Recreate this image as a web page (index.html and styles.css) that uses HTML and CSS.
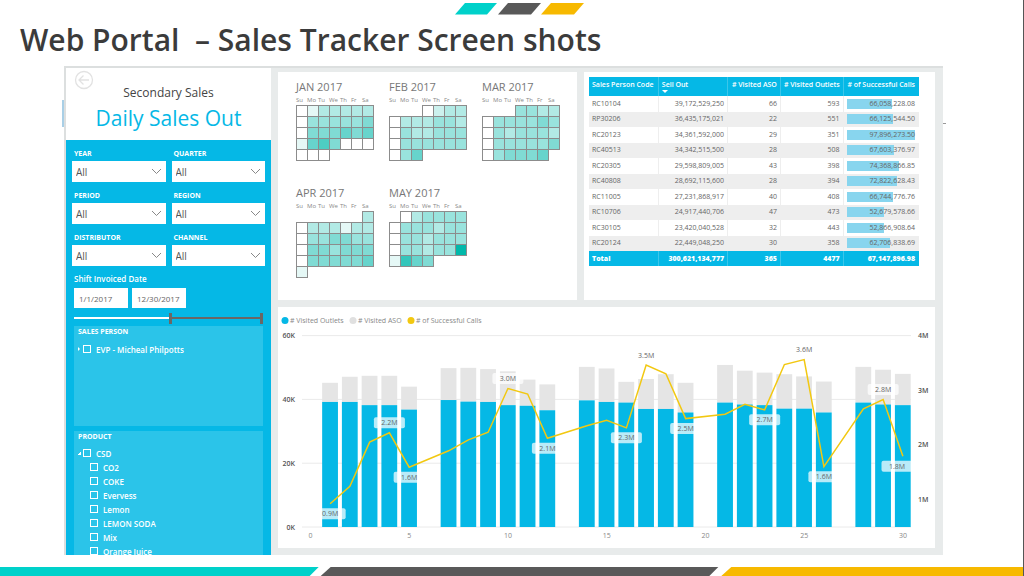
FILE: index.html
```html
<!DOCTYPE html>
<html lang="en">
<head>
<meta charset="utf-8">
<title>Sales Tracker</title>
<link rel="stylesheet" href="styles.css">
</head>
<body>
<header class="slide-header">
  <svg class="brand" viewBox="0 0 129 12" width="129" height="12" aria-hidden="true">
    <path fill="#00d1ca" d="M10 0H42L32 11.500H0z"/>
    <path fill="#595959" d="M53 0H86L76 11.500H43z"/>
    <path fill="#f7b900" d="M96 0H129L119 11.500H86z"/>
  </svg>
  <h1 class="slide-title">Web Portal&nbsp; – Sales Tracker Screen shots</h1>
</header>

<main class="dashboard">
  <aside class="sidebar">
    <div class="report-head">
      <button class="back" type="button" aria-label="Back">
        <svg viewBox="0 0 20 20" width="20" height="20" fill="none" stroke="#e2e2e2" stroke-width="1.300"><circle cx="10" cy="10" r="8.500"/><path d="M15 10H5.500M9.500 5.500L5 10l4.500 4.500"/></svg>
      </button>
      <p class="report-sub">Secondary Sales</p>
      <h2 class="report-name">Daily Sales Out</h2>
    </div>
    <form class="filters">
      <div class="filter-grid" id="filters"></div>
      <fieldset class="dates">
        <legend>Shift Invoiced Date</legend>
        <input type="text" value="1/1/2017" aria-label="Start date">
        <input type="text" value="12/30/2017" aria-label="End date">
      </fieldset>
      <div class="range">
        <input type="range" min="0" max="100" value="51" aria-label="Range start">
        <input type="range" min="0" max="100" value="100" aria-label="Range end">
      </div>
      <section class="tree tree-person">
        <h3>SALES PERSON</h3>
        <label class="node"><span class="twist"></span><input type="checkbox">EVP - Micheal Philpotts</label>
      </section>
      <section class="tree tree-product">
        <h3>PRODUCT</h3>
        <label class="node"><span class="twist open"></span><input type="checkbox">CSD</label>
        <label class="node child"><input type="checkbox">CO2</label>
        <label class="node child"><input type="checkbox">COKE</label>
        <label class="node child"><input type="checkbox">Evervess</label>
        <label class="node child"><input type="checkbox">Lemon</label>
        <label class="node child"><input type="checkbox">LEMON SODA</label>
        <label class="node child"><input type="checkbox">Mix</label>
        <label class="node child"><input type="checkbox">Orange Juice</label>
      </section>
    </form>
  </aside>

  <div class="report">
    <section class="panel calendars" id="calendars"></section>
    <section class="panel table-panel">
      <table class="sales">
        <colgroup><col class="c-code"><col class="c-sell"><col class="c-aso"><col class="c-out"><col class="c-calls"></colgroup>
        <thead><tr><th>Sales Person Code</th><th class="sorted">Sell Out</th><th class="num"># Visited ASO</th><th class="num"># Visited Outlets</th><th class="num"># of Successful Calls</th></tr></thead>
        <tbody id="rows"></tbody>
        <tfoot><tr><td>Total</td><td class="num">300,621,134,777</td><td class="num">365</td><td class="num">4477</td><td class="num">67,147,896.98</td></tr></tfoot>
      </table>
    </section>
    <section class="panel chart-panel">
      <svg class="chart" id="chart" viewBox="0 0 657 240" role="img" aria-label="Visits and successful calls by day"></svg>
    </section>
  </div>
</main>

<footer class="slide-footer">
  <svg viewBox="0 0 1024 9" preserveAspectRatio="none" aria-hidden="true">
    <path fill="#00d1ca" d="M0 0H319L310 9H0z"/>
    <path fill="#595959" d="M331 0H719L710 9H321z"/>
    <path fill="#f7b900" d="M732 0H1024V9H722z"/>
  </svg>
</footer>
<script src="app.js"></script>
</body>
</html>
```
FILE: styles.css
```css
* { box-sizing: border-box; }
body {
  margin: 0;
  min-height: 100vh;
  display: flex;
  flex-direction: column;
  background: #fff;
  color: #666;
  font-family: "Open Sans", "Noto Sans", sans-serif;
  font-size: 8px;
  border-right: 1px solid #555;
}
h1, h2, h3, p { margin: 0; font-weight: 400; }
button, input, select { font: inherit; color: inherit; }

.slide-header { height: 66px; padding: 3px 20px 0; }
.brand { display: block; margin-left: 435px; }
.slide-title { margin-top: 4px; font-size: 30px; line-height: 42px; font-weight: 600; color: #3b3b3b; white-space: nowrap; }

.dashboard {
  position: relative;
  display: flex;
  min-height: 489px;
  margin: 0 80px 0 64px;
  border-left: 2px solid #dcdfdf;
  border-top: 2px solid #dcdfdf;
  background: #e8ebeb;
}
.dashboard::before { content: ""; position: absolute; left: -4px; top: 32px; width: 2px; height: 27px; background: #a9cfe6; }
.dashboard::after { content: ""; position: absolute; right: -3px; top: 55px; width: 3px; height: 1px; background: #999; }

.sidebar { width: 205px; flex: none; display: flex; flex-direction: column; background: #05b8e6; }
.report-head { position: relative; height: 72px; padding-top: 16px; background: #fff; text-align: center; }
.back { position: absolute; left: 8px; top: 2px; width: 20px; height: 20px; padding: 0; border: 0; background: none; }
.back svg { display: block; }
.report-sub { font-size: 12px; line-height: 18px; color: #444; }
.report-name { font-size: 21px; line-height: 32px; color: #05b8e6; }

.filters { flex: 1; display: flex; flex-direction: column; padding: 6px 6px 0; color: #fff; }
.filter-grid { display: grid; grid-template-columns: 1fr 1fr; gap: 6px; }
.filter { display: block; position: relative; }
.filter-name { display: block; padding: 0 2px; font-size: 7px; line-height: 15px; font-weight: 700; }
.filter select { display: block; width: 100%; height: 21px; padding: 1px 4px 0; border: 0; border-radius: 0; background: #fff; color: #555; font-size: 10px; appearance: none; }
.filter svg { position: absolute; right: 4px; bottom: 7px; }

.dates { margin: 6px 0 0; padding: 0 2px; border: 0; display: flex; gap: 4px; }
.dates legend { padding: 0; font-size: 8px; line-height: 14px; margin-bottom: 2px; font-weight: 600; }
.dates input { width: 54px; height: 20px; padding: 0 5px; border: 0; background: #fff; color: #666; font-size: 8px; }

.range { position: relative; height: 14px; margin: 3px 2px 1px; background: linear-gradient(90deg, #fff 51%, #6b6765 51%) center / 100% 2px no-repeat; }
.range input { position: absolute; inset: 0; width: 100%; height: 14px; margin: 0; appearance: none; background: none; pointer-events: none; }
.range input::-webkit-slider-thumb { appearance: none; width: 3px; height: 11px; background: #6b6765; pointer-events: auto; }

.tree { margin: 0 2px; padding: 0 4px; background: #2bc4e9; overflow: hidden; }
.tree h3 { font-size: 7px; line-height: 12px; font-weight: 700; }
.tree-person { height: 100px; margin-bottom: 5px; }
.tree-person .node { margin-top: 4px; }
.tree-product { flex: 1 1 0; min-height: 120px; }
.tree-product h3 { margin-bottom: 3px; }
.node { display: flex; align-items: center; height: 14px; font-size: 8px; font-weight: 600; }
.node input { appearance: none; width: 8px; height: 8px; margin: 0 5px 0 0; border: 1px solid #fff; }
.child { padding-left: 12px; }
.twist { width: 5px; flex: none; }
.twist::before { content: ""; display: block; width: 0; height: 0; border-left: 2px solid #fff; border-top: 2px solid transparent; border-bottom: 2px solid transparent; }
.twist.open::before { border: 0; width: 3px; height: 3px; background: linear-gradient(135deg, transparent 50%, #fff 50%); }

.report { flex: 1; min-width: 0; display: grid; grid-template-columns: 299fr 351fr; grid-template-rows: 228px auto; gap: 7px; padding: 4px 8px 7px 7px; }
.panel { background: #fff; min-width: 0; }
.chart-panel { grid-column: 1 / -1; }
.chart { display: block; width: 100%; }

.calendars { display: flex; flex-wrap: wrap; align-content: flex-start; gap: 0 15px; padding: 7px 14px 0 18px; }
.month { width: 78px; height: 106px; }
.month h3 { font-size: 11px; line-height: 15px; color: #777; }
.days { display: grid; grid-template-columns: repeat(7, 11px); grid-auto-rows: 11px; }
.dow { font-size: 6px; line-height: 8px; color: #888; padding-top: 2px; }
.dow-row { grid-auto-rows: 11px; }
.day { width: 12px; height: 12px; border: 1px solid #8c8c8c; }

.table-panel { padding: 5px 16px 0 5px; }
.sales { width: 100%; height: 189px; table-layout: fixed; border-collapse: collapse; font-size: 7px; line-height: 10px; }
.c-code, .c-sell { width: 21%; }
.c-aso { width: 16%; }
.c-out { width: 19%; }
.c-calls { width: 23%; }
.sales th, .sales td { height: 15px; padding: 0 3px; text-align: left; white-space: nowrap; border-right: 1px solid #eee; }
.sales thead th { height: 19px; padding-top: 3px; vertical-align: top; font-weight: 600; }
.sales thead tr, .sales tfoot tr { background: #05b8e6; color: #fff; }
.sales thead th, .sales tfoot td { border-color: #3cc6ea; }
.sales tfoot td { font-weight: 800; }
.sales .num { text-align: right; }
.sales tr > :last-child { border-right: 0; padding-right: 4px; }
.sales tbody tr:nth-child(even) { background: #eee; }
.sorted::after { content: ""; display: block; width: 0; border: 3px solid transparent; border-top-color: #fff; border-bottom: 0; }
.bar { display: flex; justify-content: flex-end; position: relative; height: 10px; z-index: 0; }
.bar i { position: absolute; left: 0; top: 0; bottom: 0; background: #88d5ee; z-index: -1; }

.slide-footer { height: 9px; margin-top: auto; }
.slide-footer svg { display: block; width: 100%; height: 9px; }
```
FILE: app.js
```js
const byId = (id) => document.getElementById(id);

byId("filters").innerHTML = ["YEAR", "QUARTER", "PERIOD", "REGION", "DISTRIBUTOR", "CHANNEL"].map((n) =>
  `<label class="filter"><span class="filter-name">${n}</span><select><option>All</option></select>` +
  `<svg width="11" height="7" viewBox="0 0 11 7" fill="none" stroke="#888"><path d="M1 1l4.500 4.500L10 1"/></svg></label>`).join("");

/* Each digit is a day's intensity; "a" is the maximum. */
const months = [
  ["JAN 2017", 0, "0133333044444505556561675000000"],
  ["FEB 2017", 3, "0233033344304334440444444046"],
  ["MAR 2017", 3, "4433044445404344430444445045556"],
  ["APR 2017", 6, "303331330445544055455505555561"],
  ["MAY 2017", 1, "0344440444344044344404434" + "4a1865"],
];
const shade = (c) => `rgba(1, 184, 170, ${parseInt(c, 16) / 10})`;
byId("calendars").innerHTML = months.map(([name, start, days]) =>
  `<div class="month"><h3>${name}</h3><div class="days dow-row">` +
  ["Su", "Mo", "Tu", "We", "Th", "Fr", "Sa"].map((d) => `<span class="dow">${d}</span>`).join("") +
  `</div><div class="days">` +
  [...days].map((c, i) => `<span class="day" style="background-color:${shade(c)}${i ? "" : `;grid-column:${start + 1}`}"></span>`).join("") +
  `</div></div>`).join("");

const rows = [
  ["RC10104", "39,172,529,250", 66, 593, "66,058,228.08"],
  ["RP30206", "36,435,175,021", 22, 551, "66,125,544.50"],
  ["RC20123", "34,361,592,000", 29, 351, "97,896,273.50"],
  ["RC40513", "34,342,515,500", 28, 508, "67,603,376.97"],
  ["RC20305", "29,598,809,005", 43, 398, "74,368,866.85"],
  ["RC40808", "28,692,115,600", 28, 394, "72,822,628.43"],
  ["RC11005", "27,231,868,917", 40, 408, "66,744,776.76"],
  ["RC10706", "24,917,440,706", 47, 473, "52,679,578.66"],
  ["RC30105", "23,420,040,528", 32, 443, "52,866,908.64"],
  ["RC20124", "22,449,048,250", 30, 358, "62,706,838.69"],
];
byId("rows").innerHTML = rows.map(([code, sell, aso, out, calls]) => {
  const pct = Math.round(parseFloat(calls.replace(/,/g, "")) / 978962.735);
  return `<tr><td>${code}</td><td class="num">${sell}</td><td class="num">${aso}</td><td class="num">${out}</td>` +
    `<td class="num"><div class="bar"><i style="width:${pct}%"></i>${calls}</div></td></tr>`;
}).join("");

/* day, outlets (K), outlets + ASO (K), calls (M), label, label below the point */
const data = [
  [1, 39.2, 45.2, 0.92, "0.9M", 1], [2, 39.2, 47.1, 1.24], [3, 38.2, 47.4, 2.05], [4, 38.2, 47.4, 2.22, "2.2M", 0],
  [5, 36.8, 44, 1.59, "1.6M", 1], [7, 39.8, 49.8, 1.89], [8, 39.3, 49.9, 2.09], [9, 39.2, 49.5, 2.23],
  [10, 38.2, 48.8, 3.03, "3.0M", 0], [11, 38, 46.2, 2.93], [12, 36.6, 44.7, 2.12, "2.1M", 1],
  [14, 39.7, 50.2, 2.35], [15, 39.2, 49.7, 2.45], [16, 39, 45.5, 2.31, "2.3M", 1], [17, 37, 46.4, 3.46, "3.5M", 0],
  [18, 37, 47.9, 3.3], [19, 35.9, 45.2, 2.48, "2.5M", 1], [21, 39, 50.8, 2.56], [22, 38.4, 49, 2.74],
  [23, 38.2, 48.4, 2.64, "2.7M", 1], [24, 37.1, 47.9, 3.47], [25, 37.1, 47.2, 3.56, "3.6M", 0],
  [26, 35.9, 45.6, 1.6, "1.6M", 1], [28, 39, 50.2, 2.66], [29, 38.4, 49.3, 2.83, "2.8M", 0], [30, 38.2, 48, 1.79, "1.8M", 1],
];
const base = 220;
const px = (d) => 32.4 + d * 19.75;
const yk = (v) => base - v * 3.19;
const ym = (v) => 192.4 - (v - 1) * 54.6;
const text = (x, y, s, cls) => `<text x="${x}" y="${y}" font-size="7" ${cls || ""}>${s}</text>`;
let out = "";
[0, 20, 40, 60].forEach((v) => {
  out += `<path d="M24 ${yk(v)}H633" stroke="#eaeaea"/>`;
  out += text(17, yk(v) + 2.5, v + "K", 'text-anchor="end" fill="#555" font-weight="600"');
});
[1, 2, 3, 4].forEach((v) => { out += text(640, ym(v) + 2.5, v + "M", 'fill="#555" font-weight="600"'); });
[0, 5, 10, 15, 20, 25, 30].forEach((v) => { out += text(px(v), 231, v, 'text-anchor="middle" fill="#888"'); });
data.forEach(([d, a, t]) => {
  const x = px(d) - 8;
  out += `<rect x="${x}" y="${yk(t)}" width="15.800" height="${yk(a) - yk(t)}" fill="#e5e5e5"/>`;
  out += `<rect x="${x}" y="${yk(a)}" width="15.800" height="${base - yk(a)}" fill="#05b8e6"/>`;
});
out += `<polyline fill="none" stroke="#f2c811" stroke-width="1.500" points="${data.map(([d, , , m]) => px(d) + "," + ym(m)).join(" ")}"/>`;
data.filter((r) => r[4]).forEach(([d, , , m, label, below]) => {
  const x = Math.min(px(d), 619), y = ym(m) + (below ? 10 : -10);
  out += `<rect x="${x - 15.5}" y="${y - 5.5}" width="31" height="11" rx="2" fill="#fff" fill-opacity=".72"/>`;
  out += text(x, y + 2.5, label, 'text-anchor="middle" fill="#666"');
});
[["#05b8e6", 7, "# Visited Outlets"], ["#e0e0e0", 75, "# Visited ASO"], ["#f2c811", 133, "# of Successful Calls"]].forEach(([c, x, s]) => {
  out += `<circle cx="${x}" cy="13.500" r="3.500" fill="${c}"/>` + text(x + 5, 16, s, 'fill="#888"');
});
byId("chart").innerHTML = out;
```
